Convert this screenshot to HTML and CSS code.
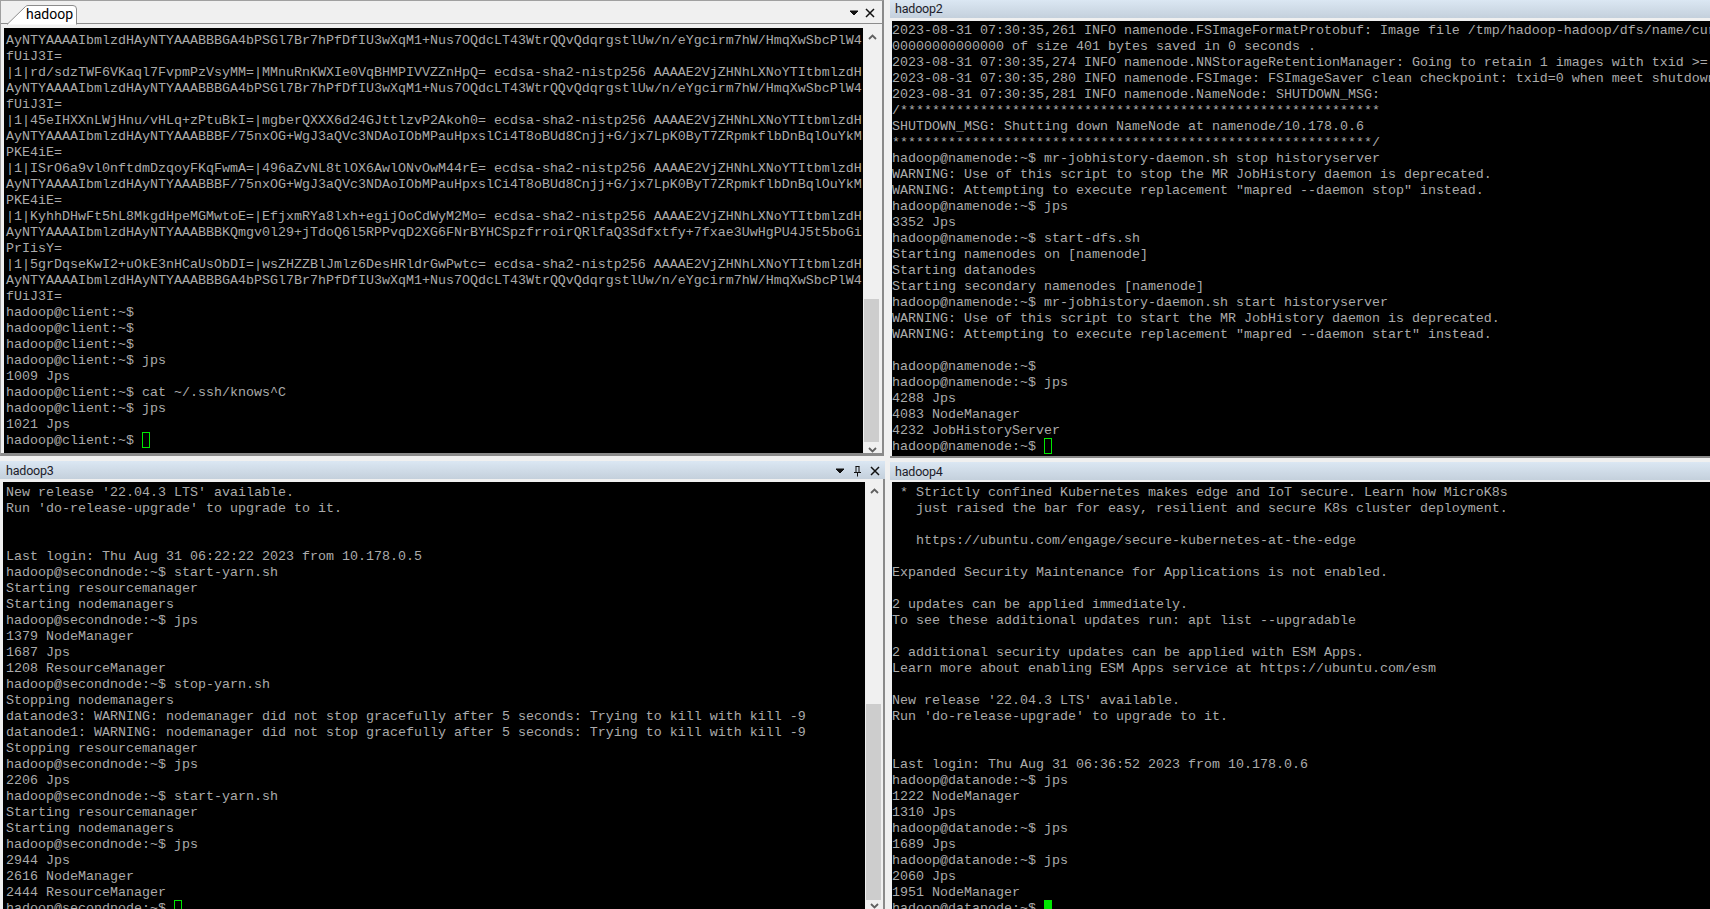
FILE: index.html
```html
<!DOCTYPE html>
<html lang="en">
<head>
<meta charset="utf-8">
<title>hadoop sessions</title>
<link rel="stylesheet" href="styles.css">
</head>
<body>
<main class="app">
  <div class="col col-left">
    <section class="pane pane-tabbed">
      <div class="tabbar">
        <div class="tab">
          <svg class="tab-shape" width="80" height="20" viewBox="0 0 80 20"><path d="M0 19.5 L18.5 1.5 Q19.5 .5 21 .5 L66 .5 Q69.5 .5 69.5 4 L69.5 19.5" fill="#fff" stroke="#8c8c8c"/></svg>
          <span class="tab-label">hadoop</span>
        </div>
        <div class="tools">
          <svg class="ico" width="10" height="6" viewBox="0 0 10 6"><path d="M1 1h8L5 5z" fill="#111" stroke="#111"/></svg>
          <svg class="ico" width="10" height="10" viewBox="0 0 10 10"><path d="M1 1l8 8M9 1l-8 8" stroke="#111" stroke-width="1.5" fill="none"/></svg>
        </div>
      </div>
      <div class="body body-tabbed">
<pre class="term term-a">AyNTYAAAAIbmlzdHAyNTYAAABBBGA4bPSGl7Br7hPfDfIU3wXqM1+Nus7OQdcLT43WtrQQvQdqrgstlUw/n/eYgcirm7hW/HmqXwSbcPlW4
fUiJ3I=
|1|rd/sdzTWF6VKaql7FvpmPzVsyMM=|MMnuRnKWXIe0VqBHMPIVVZZnHpQ= ecdsa-sha2-nistp256 AAAAE2VjZHNhLXNoYTItbmlzdH
AyNTYAAAAIbmlzdHAyNTYAAABBBGA4bPSGl7Br7hPfDfIU3wXqM1+Nus7OQdcLT43WtrQQvQdqrgstlUw/n/eYgcirm7hW/HmqXwSbcPlW4
fUiJ3I=
|1|45eIHXXnLWjHnu/vHLq+zPtuBkI=|mgberQXXX6d24GJttlzvP2Akoh0= ecdsa-sha2-nistp256 AAAAE2VjZHNhLXNoYTItbmlzdH
AyNTYAAAAIbmlzdHAyNTYAAABBBF/75nxOG+WgJ3aQVc3NDAoIObMPauHpxslCi4T8oBUd8Cnjj+G/jx7LpK0ByT7ZRpmkflbDnBqlOuYkM
PKE4iE=
|1|ISrO6a9vl0nftdmDzqoyFKqFwmA=|496aZvNL8tlOX6AwlONvOwM44rE= ecdsa-sha2-nistp256 AAAAE2VjZHNhLXNoYTItbmlzdH
AyNTYAAAAIbmlzdHAyNTYAAABBBF/75nxOG+WgJ3aQVc3NDAoIObMPauHpxslCi4T8oBUd8Cnjj+G/jx7LpK0ByT7ZRpmkflbDnBqlOuYkM
PKE4iE=
|1|KyhhDHwFt5hL8MkgdHpeMGMwtoE=|EfjxmRYa8lxh+egijOoCdWyM2Mo= ecdsa-sha2-nistp256 AAAAE2VjZHNhLXNoYTItbmlzdH
AyNTYAAAAIbmlzdHAyNTYAAABBBKQmgv0l29+jTdoQ6l5RPPvqD2XG6FNrBYHCSpzfrroirQRlfaQ3Sdfxtfy+7fxae3UwHgPU4J5t5boGi
PrIisY=
|1|5grDqseKwI2+uOkE3nHCaUsObDI=|wsZHZZBlJmlz6DesHRldrGwPwtc= ecdsa-sha2-nistp256 AAAAE2VjZHNhLXNoYTItbmlzdH
AyNTYAAAAIbmlzdHAyNTYAAABBBGA4bPSGl7Br7hPfDfIU3wXqM1+Nus7OQdcLT43WtrQQvQdqrgstlUw/n/eYgcirm7hW/HmqXwSbcPlW4
fUiJ3I=
hadoop@client:~$
hadoop@client:~$
hadoop@client:~$
hadoop@client:~$ jps
1009 Jps
hadoop@client:~$ cat ~/.ssh/knows^C
hadoop@client:~$ jps
1021 Jps
hadoop@client:~$ <span class="cursor"> </span></pre>
        <div class="scrollbar">
          <svg class="chev" width="9" height="6" viewBox="0 0 9 6"><path d="M1 5l3.5-3.5L8 5" stroke="#606060" stroke-width="1.8" fill="none"/></svg>
          <div class="track track-a"><div class="thumb"></div></div>
          <svg class="chev" width="9" height="6" viewBox="0 0 9 6"><path d="M1 1l3.5 3.5L8 1" stroke="#606060" stroke-width="1.8" fill="none"/></svg>
        </div>
      </div>
    </section>
    <section class="pane pane-c">
      <header class="title">
        <span class="title-text title-text-c">hadoop3</span>
        <div class="tools tools-title">
          <svg class="ico" width="10" height="6" viewBox="0 0 10 6"><path d="M1 1h8L5 5z" fill="#111" stroke="#111"/></svg>
          <svg class="ico" width="9" height="11" viewBox="0 0 9 11"><path d="M2.5 .5h4M3 .5v5.500M6 .5v5.500M1 6.500h7M4.500 6.500v4" stroke="#111" fill="none"/></svg>
          <svg class="ico" width="10" height="10" viewBox="0 0 10 10"><path d="M1 1l8 8M9 1l-8 8" stroke="#111" stroke-width="1.5" fill="none"/></svg>
        </div>
      </header>
      <div class="body body-c">
<pre class="term term-c">New release '22.04.3 LTS' available.
Run 'do-release-upgrade' to upgrade to it.


Last login: Thu Aug 31 06:22:22 2023 from 10.178.0.5
hadoop@secondnode:~$ start-yarn.sh
Starting resourcemanager
Starting nodemanagers
hadoop@secondnode:~$ jps
1379 NodeManager
1687 Jps
1208 ResourceManager
hadoop@secondnode:~$ stop-yarn.sh
Stopping nodemanagers
datanode3: WARNING: nodemanager did not stop gracefully after 5 seconds: Trying to kill with kill -9
datanode1: WARNING: nodemanager did not stop gracefully after 5 seconds: Trying to kill with kill -9
Stopping resourcemanager
hadoop@secondnode:~$ jps
2206 Jps
hadoop@secondnode:~$ start-yarn.sh
Starting resourcemanager
Starting nodemanagers
hadoop@secondnode:~$ jps
2944 Jps
2616 NodeManager
2444 ResourceManager
hadoop@secondnode:~$ <span class="cursor"> </span></pre>
        <div class="scrollbar">
          <svg class="chev" width="9" height="6" viewBox="0 0 9 6"><path d="M1 5l3.5-3.500L8 5" stroke="#606060" stroke-width="1.8" fill="none"/></svg>
          <div class="track track-c"><div class="thumb"></div></div>
          <svg class="chev" width="9" height="6" viewBox="0 0 9 6"><path d="M1 1l3.5 3.500L8 1" stroke="#606060" stroke-width="1.8" fill="none"/></svg>
        </div>
      </div>
    </section>
  </div>
  <div class="col col-right">
    <section class="pane pane-b">
      <header class="title"><span class="title-text">hadoop2</span></header>
<pre class="term term-b">2023-08-31 07:30:35,261 INFO namenode.FSImageFormatProtobuf: Image file /tmp/hadoop-hadoop/dfs/name/current/fsimage.ckpt_00
00000000000000 of size 401 bytes saved in 0 seconds .
2023-08-31 07:30:35,274 INFO namenode.NNStorageRetentionManager: Going to retain 1 images with txid &gt;= 0
2023-08-31 07:30:35,280 INFO namenode.FSImage: FSImageSaver clean checkpoint: txid=0 when meet shutdown.
2023-08-31 07:30:35,281 INFO namenode.NameNode: SHUTDOWN_MSG:
/************************************************************
SHUTDOWN_MSG: Shutting down NameNode at namenode/10.178.0.6
************************************************************/
hadoop@namenode:~$ mr-jobhistory-daemon.sh stop historyserver
WARNING: Use of this script to stop the MR JobHistory daemon is deprecated.
WARNING: Attempting to execute replacement "mapred --daemon stop" instead.
hadoop@namenode:~$ jps
3352 Jps
hadoop@namenode:~$ start-dfs.sh
Starting namenodes on [namenode]
Starting datanodes
Starting secondary namenodes [namenode]
hadoop@namenode:~$ mr-jobhistory-daemon.sh start historyserver
WARNING: Use of this script to start the MR JobHistory daemon is deprecated.
WARNING: Attempting to execute replacement "mapred --daemon start" instead.

hadoop@namenode:~$
hadoop@namenode:~$ jps
4288 Jps
4083 NodeManager
4232 JobHistoryServer
hadoop@namenode:~$ <span class="cursor"> </span></pre>
    </section>
    <section class="pane pane-d">
      <header class="title"><span class="title-text title-text-d">hadoop4</span></header>
<pre class="term term-d"> * Strictly confined Kubernetes makes edge and IoT secure. Learn how MicroK8s
   just raised the bar for easy, resilient and secure K8s cluster deployment.

   https://ubuntu.com/engage/secure-kubernetes-at-the-edge

Expanded Security Maintenance for Applications is not enabled.

2 updates can be applied immediately.
To see these additional updates run: apt list --upgradable

2 additional security updates can be applied with ESM Apps.
Learn more about enabling ESM Apps service at https://ubuntu.com/esm

New release '22.04.3 LTS' available.
Run 'do-release-upgrade' to upgrade to it.


Last login: Thu Aug 31 06:36:52 2023 from 10.178.0.6
hadoop@datanode:~$ jps
1222 NodeManager
1310 Jps
hadoop@datanode:~$ jps
1689 Jps
hadoop@datanode:~$ jps
2060 Jps
1951 NodeManager
hadoop@datanode:~$ <span class="cursor cursor-solid"> </span></pre>
    </section>
  </div>
</main>
</body>
</html>
```

FILE: styles.css
```css
* { box-sizing: border-box; }
html, body { margin: 0; padding: 0; height: 100%; overflow: hidden; background: #f0f0f0; }

.app {
  display: grid;
  grid-template-columns: 885px 825px;
  width: 1710px;
  height: 909px;
  overflow: hidden;
}

.col { display: flex; flex-direction: column; min-height: 0; min-width: 0; }

.pane { display: flex; flex-direction: column; min-height: 0; overflow: hidden; }

.pane-tabbed {
  height: 456px;
  margin-bottom: 5px;
  margin-right: 1px;
  flex: none;
  border-top: 1px solid #a0a0a0;
  border-left: 1px solid #a0a0a0;
  border-right: 2px solid #8a8a8a;
  border-bottom: 3px solid #8a8a8a;
}

.tabbar {
  height: 23px;
  flex: none;
  display: flex;
  justify-content: space-between;
  border-bottom: 1px solid #8c8c8c;
  background: #f0f0f0;
}

.tab { position: relative; width: 80px; height: 23px; margin-left: 6px; }
.tab-shape { position: absolute; left: 0; top: 4px; }
.tab-label {
  position: absolute;
  left: 19px;
  top: 3px;
  font: 400 14px/20px Roboto, "Noto Sans", sans-serif;
  color: #000;
}

.tools { display: flex; align-items: center; gap: 6px; padding-right: 7px; height: 23px; }
.tools-title { height: 18px; gap: 8px; padding: 2px 5px 0 0; }
.ico { display: block; flex: none; }

.body { flex: 1; display: flex; min-height: 0; }
.body-tabbed { padding: 4px 1px 0 3px; background: #f0f0f0; }

.title {
  height: 18px;
  flex: none;
  display: flex;
  align-items: center;
  justify-content: space-between;
  background: linear-gradient(#dbe7f3, #c4d0dc);
}
.title-text {
  padding-left: 5px;
  font: 12.5px/18px Roboto, "Noto Sans", sans-serif;
  letter-spacing: -0.2px;
  color: #1c1c2a;
}
.title-text-c { padding: 1px 0 0 6px; }
.title-text-d { padding-top: 1px; }

.term {
  margin: 0;
  flex: 1;
  min-width: 0;
  background: #000;
  color: #ababab;
  font: 13.333px/16px "Liberation Mono", monospace;
  white-space: pre;
  overflow: hidden;
}
.term-a { padding: 5px 0 0 2px; }
.term-c { padding: 3px 0 0 3px; }
.term-b { padding: 2px 0 0 0; margin: 3px 0 0 2px; }
.term-d { padding: 3px 0 0 0; margin: 2px 0 0 2px; }

.cursor {
  display: inline-block;
  width: 8px;
  height: 16px;
  vertical-align: top;
  position: relative;
  top: -1px;
  border: 1px solid #00e800;
}
.cursor-solid { background: #00e800; }

.scrollbar {
  width: 18px;
  flex: none;
  display: flex;
  flex-direction: column;
  align-items: center;
  background: #f0f0f0;
  padding-top: 6px;
}
.chev { display: block; flex: none; }
.track { flex: 1; width: 100%; padding: 0 2px 0 1px; }
.thumb { height: 100%; background: #cdcdcd; }
.track-a { padding-top: 259px; padding-bottom: 5px; }
.track-c { padding-top: 210px; padding-bottom: 3px; }

.pane-c { flex: 1; }
.body-c { padding: 3px 0 0 3px; background: #f0f0f0; border-right: 2px solid #8a8a8a; }

.pane-b { height: 458px; margin: 0 0 4px 5px; flex: none; border-bottom: 2px solid #8a8a8a; background: #f0f0f0; }
.pane-d { flex: 1; margin-left: 5px; }
```
